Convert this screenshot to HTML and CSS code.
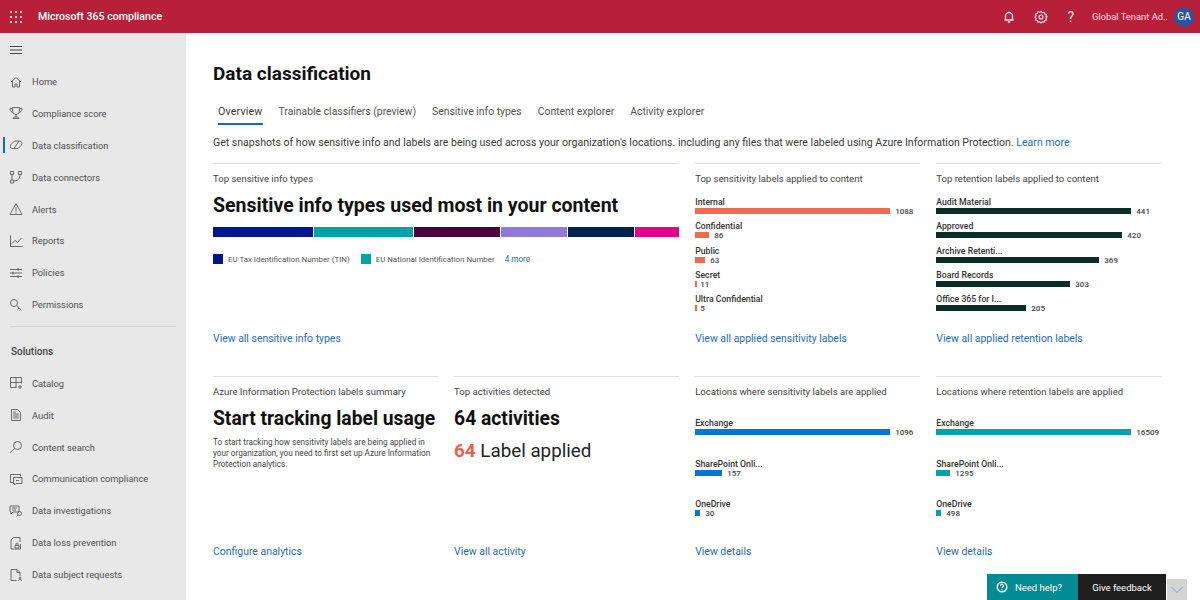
FILE: index.html
```html
<!DOCTYPE html>
<html lang="en">
<head>
<meta charset="utf-8">
<title>Data classification - Microsoft 365 compliance</title>
<link rel="stylesheet" href="styles.css">
</head>
<body>
<div class="app">
  <header class="topbar">
    <svg class="waffle" width="12" height="12" viewBox="0 0 12 12" fill="currentColor"><rect x="0" y="0" width="2" height="2"/><rect x="5" y="0" width="2" height="2"/><rect x="10" y="0" width="2" height="2"/><rect x="0" y="5" width="2" height="2"/><rect x="5" y="5" width="2" height="2"/><rect x="10" y="5" width="2" height="2"/><rect x="0" y="10" width="2" height="2"/><rect x="5" y="10" width="2" height="2"/><rect x="10" y="10" width="2" height="2"/></svg>
    <div class="brand">Microsoft 365 compliance</div>
    <div class="top-actions">
      <svg class="top-icon" width="14" height="14" viewBox="0 0 14 14" fill="none" stroke="currentColor" stroke-width="1.3"><path d="M3.500 10V6a3.500 3.500 0 0 1 7 0v4zM2.500 10h9M5.800 12h2.400"/></svg>
      <svg class="top-icon" width="14" height="14" viewBox="0 0 14 14" fill="none" stroke="currentColor" stroke-width="1.1"><circle cx="7" cy="7" r="2"/><path d="M7 1.500l1.300 1.200 1.800-.4.600 1.700 1.700.6-.4 1.800L13 7l-1 1.100.4 1.800-1.700.6-.6 1.700-1.800-.4L7 13l-1.300-1.200-1.800.4-.6-1.700-1.700-.6.4-1.800L1 7l1-1.100-.4-1.800 1.700-.6.6-1.700 1.800.4z"/></svg>
      <span class="help">?</span>
      <span class="user">Global Tenant Ad..</span>
      <span class="avatar">GA</span>
    </div>
  </header>
  <div class="body">
    <nav class="sidebar">
      <div class="nav-row burger">
        <svg width="12" height="10" viewBox="0 0 12 10" stroke="currentColor" stroke-width="1"><path d="M0 1.500h12M0 5h12M0 8.500h12"/></svg>
      </div>
      <a class="nav-row"><svg class="nav-icon" viewBox="0 0 16 16"><path d="M3 8L8 3.500 13 8M4.500 7v6h2.500v-3h2v3h2.500V7"/></svg>Home</a>
      <a class="nav-row"><svg class="nav-icon" viewBox="0 0 16 16"><path d="M4.500 2.500h7v3.500a3.500 3.500 0 0 1-7 0zM4.500 3.500H2c0 2.500 1 3.500 3 4M11.500 3.500H14c0 2.500-1 3.500-3 4M8 9.500v2.500M5 13.500c0-1 1-1.500 3-1.500s3 .5 3 1.500z"/></svg>Compliance score</a>
      <a class="nav-row active"><svg class="nav-icon" viewBox="0 0 16 16"><path d="M2.500 8L6.500 4h5a2.500 2.500 0 0 1 2 4l-3.500 3.500H5.500a2.500 2.500 0 0 1-3-3.500zM6 11.500L11 4"/></svg>Data classification</a>
      <a class="nav-row"><svg class="nav-icon" viewBox="0 0 16 16"><path d="M2.500 2.500h3v3h-3zM2.500 11h3v3h-3zM10.500 2.500h3v3h-3zM4 5.500V11M12 5.500c0 4-2 6.500-6.500 6.500"/></svg>Data connectors</a>
      <a class="nav-row"><svg class="nav-icon" viewBox="0 0 16 16"><path d="M8 2.500l6 11H2zM8 6.500v4M8 11.500v1"/></svg>Alerts</a>
      <a class="nav-row"><svg class="nav-icon" viewBox="0 0 16 16"><path d="M2.500 2.500v11h12M4 10.500l3-3 2.500 2 4-4.500"/></svg>Reports</a>
      <a class="nav-row"><svg class="nav-icon" viewBox="0 0 16 16"><path d="M2 4.500h12M2 8h12M2 11.500h12M10 3v3M5 6.500v3M10 10v3"/></svg>Policies</a>
      <a class="nav-row"><svg class="nav-icon" viewBox="0 0 16 16"><circle cx="6" cy="6" r="3.500"/><path d="M8.500 8.500l5 5M11 11l-1.500 1.500M12.500 12.500l-1 1"/></svg>Permissions</a>
      <div class="nav-divider"></div>
      <div class="nav-section">Solutions</div>
      <a class="nav-row"><svg class="nav-icon" viewBox="0 0 16 16"><path d="M2.500 2.500h11v6M2.500 2.500v10h6M2.500 7.500h11M8 2.500v10M12 10v4M10 12h4"/></svg>Catalog</a>
      <a class="nav-row"><svg class="nav-icon" viewBox="0 0 16 16"><path d="M3.500 2.500h6l3 3v8h-9zM5 7h6M5 9h6M5 11h6M5 5h3"/></svg>Audit</a>
      <a class="nav-row"><svg class="nav-icon" viewBox="0 0 16 16"><circle cx="9.500" cy="6.500" r="4"/><path d="M6.500 9.500l-4.500 4.500"/></svg>Content search</a>
      <a class="nav-row"><svg class="nav-icon" viewBox="0 0 16 16"><path d="M2.500 9.500v-6h10v2M5 11.500H2.500v-2M5.500 6.500h8.500v6H8l-1.500 1.500v-1.500h-1zM8 9.500h3"/></svg>Communication compliance</a>
      <a class="nav-row"><svg class="nav-icon" viewBox="0 0 16 16"><path d="M2 3h9v6H5l-2 2V9H2zM4 5h5M4 7h4"/><circle cx="11.500" cy="10.500" r="2"/><path d="M10 12l-1.500 1.500"/></svg>Data investigations</a>
      <a class="nav-row"><svg class="nav-icon" viewBox="0 0 16 16"><path d="M12 7V2.500H5.500L3 5v9h9.500V9M7 10.500h4v2.500H7zM8 10.500V9a1 1 0 0 1 2 0v1.500"/></svg>Data loss prevention</a>
      <a class="nav-row"><svg class="nav-icon" viewBox="0 0 16 16"><path d="M3 2.500h6l3 3V9M9 2.500v3h3M3 2.500v11h5.500"/><circle cx="12" cy="11" r="1"/><path d="M10.500 14c0-1 .5-1.500 1.500-1.500s1.500.5 1.500 1.500"/></svg>Data subject requests</a>
    </nav>
    <main class="main">
      <h1 class="page-title">Data classification</h1>
      <div class="tabs">
        <a class="tab tab-active">Overview</a>
        <a class="tab">Trainable classifiers (preview)</a>
        <a class="tab">Sensitive info types</a>
        <a class="tab">Content explorer</a>
        <a class="tab">Activity explorer</a>
      </div>
      <p class="intro">Get snapshots of how sensitive info and labels are being used across your organization's locations. including any files that were labeled using Azure Information Protection. <a class="link">Learn more</a></p>
      <div class="cards">
        <section class="card span-2">
          <h2 class="card-title">Top sensitive info types</h2>
          <div class="big big-wide">Sensitive info types used most in your content</div>
          <div class="stack">
            <span class="seg c-navy" style="width:100px"></span>
            <span class="seg c-teal" style="width:99px"></span>
            <span class="seg c-plum" style="width:86px"></span>
            <span class="seg c-lilac" style="width:66px"></span>
            <span class="seg c-ink" style="width:66px"></span>
            <span class="seg c-pink" style="width:44px"></span>
          </div>
          <div class="legend">
            <span class="swatch c-navy"></span><span class="legend-text first">EU Tax Identification Number (TIN)</span>
            <span class="swatch c-teal"></span><span class="legend-text second">EU National Identification Number</span>
            <a class="link more">4 more</a>
          </div>
          <a class="link foot">View all sensitive info types</a>
        </section>
        <section class="card">
          <h2 class="card-title">Top sensitivity labels applied to content</h2>
          <div class="bars">
            <div class="bar-row"><div class="bar-label">Internal</div><div class="bar-line"><span class="bar c-coral" style="width:195px"></span><span class="bar-value">1088</span></div></div>
            <div class="bar-row"><div class="bar-label">Confidential</div><div class="bar-line"><span class="bar c-coral" style="width:14px"></span><span class="bar-value">86</span></div></div>
            <div class="bar-row"><div class="bar-label">Public</div><div class="bar-line"><span class="bar c-coral" style="width:10px"></span><span class="bar-value">63</span></div></div>
            <div class="bar-row"><div class="bar-label">Secret</div><div class="bar-line"><span class="bar c-coral" style="width:2px"></span><span class="bar-value near">11</span></div></div>
            <div class="bar-row"><div class="bar-label">Ultra Confidential</div><div class="bar-line"><span class="bar c-coral" style="width:2px"></span><span class="bar-value near">5</span></div></div>
          </div>
          <a class="link foot">View all applied sensitivity labels</a>
        </section>
        <section class="card">
          <h2 class="card-title">Top retention labels applied to content</h2>
          <div class="bars">
            <div class="bar-row"><div class="bar-label">Audit Material</div><div class="bar-line"><span class="bar c-forest" style="width:195px"></span><span class="bar-value">441</span></div></div>
            <div class="bar-row"><div class="bar-label">Approved</div><div class="bar-line"><span class="bar c-forest" style="width:186px"></span><span class="bar-value">420</span></div></div>
            <div class="bar-row"><div class="bar-label">Archive Retenti...</div><div class="bar-line"><span class="bar c-forest" style="width:163px"></span><span class="bar-value">369</span></div></div>
            <div class="bar-row"><div class="bar-label">Board Records</div><div class="bar-line"><span class="bar c-forest" style="width:134px"></span><span class="bar-value">303</span></div></div>
            <div class="bar-row"><div class="bar-label">Office 365 for I...</div><div class="bar-line"><span class="bar c-forest" style="width:90px"></span><span class="bar-value">205</span></div></div>
          </div>
          <a class="link foot">View all applied retention labels</a>
        </section>
        <section class="card">
          <h2 class="card-title">Azure Information Protection labels summary</h2>
          <div class="big">Start tracking label usage</div>
          <p class="note">To start tracking how sensitivity labels are being applied in your organization, you need to first set up Azure Information Protection analytics.</p>
          <a class="link foot">Configure analytics</a>
        </section>
        <section class="card">
          <h2 class="card-title">Top activities detected</h2>
          <div class="big">64 activities</div>
          <div class="stat"><span class="stat-num">64</span> Label applied</div>
          <a class="link foot">View all activity</a>
        </section>
        <section class="card">
          <h2 class="card-title">Locations where sensitivity labels are applied</h2>
          <div class="bars bars-loose">
            <div class="bar-row"><div class="bar-label">Exchange</div><div class="bar-line"><span class="bar c-blue" style="width:195px"></span><span class="bar-value">1096</span></div></div>
            <div class="bar-row"><div class="bar-label">SharePoint Onli...</div><div class="bar-line"><span class="bar c-blue" style="width:27px"></span><span class="bar-value">157</span></div></div>
            <div class="bar-row"><div class="bar-label">OneDrive</div><div class="bar-line"><span class="bar c-blue" style="width:5px"></span><span class="bar-value">30</span></div></div>
          </div>
          <a class="link foot">View details</a>
        </section>
        <section class="card">
          <h2 class="card-title">Locations where retention labels are applied</h2>
          <div class="bars bars-loose">
            <div class="bar-row"><div class="bar-label">Exchange</div><div class="bar-line"><span class="bar c-teal" style="width:195px"></span><span class="bar-value">16509</span></div></div>
            <div class="bar-row"><div class="bar-label">SharePoint Onli...</div><div class="bar-line"><span class="bar c-teal" style="width:14px"></span><span class="bar-value">1295</span></div></div>
            <div class="bar-row"><div class="bar-label">OneDrive</div><div class="bar-line"><span class="bar c-teal" style="width:5px"></span><span class="bar-value">498</span></div></div>
          </div>
          <a class="link foot">View details</a>
        </section>
      </div>
    </main>
  </div>
  <div class="feedback">
    <div class="need-help">
      <svg width="12" height="12" viewBox="0 0 12 12" fill="none" stroke="currentColor" stroke-width="1.400"><circle cx="6" cy="6" r="4.800"/><path d="M4.500 4.800c0-2 3-2 3 0 0 1-1.500 1-1.500 2.200M6 8.200v1" stroke-width="1.100"/></svg>
      <span>Need help?</span>
    </div>
    <div class="give-feedback">Give feedback</div>
    <div class="collapse"><svg width="14" height="8" viewBox="0 0 14 8" fill="none" stroke="currentColor"><path d="M1.500 1l5.500 5.500L12.500 1"/></svg></div>
  </div>
</div>
</body>
</html>
```
FILE: styles.css
```css
* { box-sizing: border-box; }
html, body { margin: 0; height: 100%; }
body {
  font-family: Roboto, "Open Sans", "Liberation Sans", sans-serif;
  color: #323130;
  background: #fff;
  overflow: hidden;
}
.app { position: relative; width: 1200px; height: 600px; overflow: hidden; display: flex; flex-direction: column; }

/* top bar */
.topbar {
  height: 33px;
  flex: none;
  background: #b81f39;
  color: #fff;
  display: flex;
  align-items: center;
  padding-left: 10px;
}
.waffle { color: #f6d5da; }
.brand { margin-left: 16px; font-size: 10.600px; font-weight: 500; white-space: nowrap; }
.top-actions { margin-left: auto; display: flex; align-items: center; }
.top-icon { color: #fbe6ea; margin-right: 18px; }
.help { font-size: 14px; line-height: 14px; width: 12px; text-align: center; color: #fbe6ea; margin-left: -1px; }
.user { margin-left: 15px; font-size: 9.400px; white-space: nowrap; color: #f9e4e8; }
.avatar {
  margin: 0 6px 0 6px;
  width: 20px; height: 20px;
  border-radius: 50%;
  background: #2a5596;
  color: #fff;
  font-size: 10px;
  display: flex; align-items: center; justify-content: center;
}

/* layout */
.body { flex: 1; display: flex; min-height: 0; }
.sidebar { width: 186px; flex: none; background: #e8e8e8; color: #505050; }
.nav-row {
  position: relative;
  display: flex; align-items: center;
  height: 31.900px;
  padding-left: 8px;
  font-size: 9.300px;
  white-space: nowrap;
}
.burger { height: 32.600px; padding: 1px 0 0 10px; color: #444; }
.nav-icon {
  width: 16px; height: 16px;
  flex: none;
  margin-right: 8px;
  fill: none;
  stroke: #5c5c5c;
  stroke-width: .9;
}
.active::before {
  content: "";
  position: absolute;
  left: 3px; top: 8px;
  width: 2px; height: 16px;
  background: #0f6cbd;
}
.nav-divider { height: 1px; background: #d2d2d2; margin: 5.600px 10px 8px; }
.nav-section { height: 32px; line-height: 33px; padding-left: 11px; font-size: 10px; font-weight: 500; color: #444; }

/* main */
.main { flex: 1; min-width: 0; padding-left: 27px; }
.page-title { margin: 28px 0 0; font-size: 19px; line-height: 26px; font-weight: 700; color: #111; white-space: nowrap; }
.tabs { display: flex; gap: 16px; margin: 13px 0 0 5px; }
.tab { font-size: 10.400px; line-height: 24px; height: 25px; color: #555; white-space: nowrap; }
.tab-active { font-size: 10.700px; letter-spacing: .15px; color: #3b3b3b; border-bottom: 2px solid #0f6cbd; }
.intro { margin: 11px 0 0; font-size: 10.560px; line-height: 14px; color: #3b3b3b; white-space: nowrap; }
.link { color: #2b6cb0; }
.cards {
  display: grid;
  grid-template-columns: repeat(4, 225.100px);
  grid-auto-rows: 186px;
  column-gap: 16px;
  row-gap: 27px;
  margin-top: 13px;
}
.card { border-top: 1px solid #e1e1e1; padding-top: 8px; display: flex; flex-direction: column; min-width: 0; }
.span-2 { grid-column: span 2; }
.card-title { margin: 0; font-size: 9.550px; line-height: 14px; font-weight: 400; color: #444; white-space: nowrap; }
.big { margin-top: 8px; font-size: 19.300px; line-height: 24px; font-weight: 700; color: #111; white-space: nowrap; }
.big-wide { margin-top: 8px; font-size: 19.500px; }
.foot { margin-top: auto; font-size: 10.450px; line-height: 20px; white-space: nowrap; }

/* stacked bar */
.stack { display: flex; gap: 1px; height: 10px; margin-top: 9px; }
.seg { display: block; height: 100%; }
.legend { display: flex; align-items: center; margin-top: 16px; height: 12px; font-size: 7.900px; color: #555; white-space: nowrap; }
.swatch { width: 10px; height: 10px; flex: none; margin-right: 5px; }
.legend-text.first { margin-right: 11px; }
.legend-text.second { margin-right: 10px; }
.more { font-size: 8.200px; }
.c-navy { background: #00188f; }
.c-teal { background: #00a3a9; }
.c-plum { background: #4b003f; }
.c-lilac { background: #9079d8; }
.c-ink { background: #002050; }
.c-pink { background: #e3008c; }
.c-coral { background: #ee6a50; }
.c-forest { background: #0a2e26; }
.c-blue { background: #0078d4; }

/* bar lists */
.bars { margin-top: 10px; }
.bars-loose { margin-top: 18px; }
.bar-row { height: 24.250px; }
.bars-loose .bar-row { height: 40.500px; }
.bar-label { font-size: 8.700px; line-height: 12px; font-weight: 500; color: #333; white-space: nowrap; }
.bar-line { display: flex; align-items: center; height: 6px; }
.bar { display: block; height: 6px; flex: none; }
.bar-value { margin-left: 5px; font-size: 8px; line-height: 12px; font-weight: 500; color: #444; position: relative; top: 1px; }
.bar-value.near { margin-left: 3px; }

/* other cards */
.note { margin: 6px 0 0; font-size: 8.200px; line-height: 11px; color: #444; }
.stat { margin-top: 6px; font-size: 18.800px; line-height: 28px; color: #222; white-space: nowrap; }
.stat-num { font-weight: 700; color: #e8604c; }

/* floating help */
.feedback { position: absolute; right: 13px; bottom: 0; display: flex; align-items: flex-end; height: 26px; font-size: 9.500px; color: #fff; }
.need-help { width: 91px; height: 26px; background: #008a94; display: flex; align-items: center; gap: 7px; padding-left: 9px; }
.give-feedback { width: 88px; height: 26px; background: #1f1f1f; display: flex; align-items: center; justify-content: center; }
.collapse { width: 20px; height: 21px; margin-left: 1px; background: #d4d4d4; color: #8aa0c0; display: flex; align-items: center; justify-content: center; }
```
